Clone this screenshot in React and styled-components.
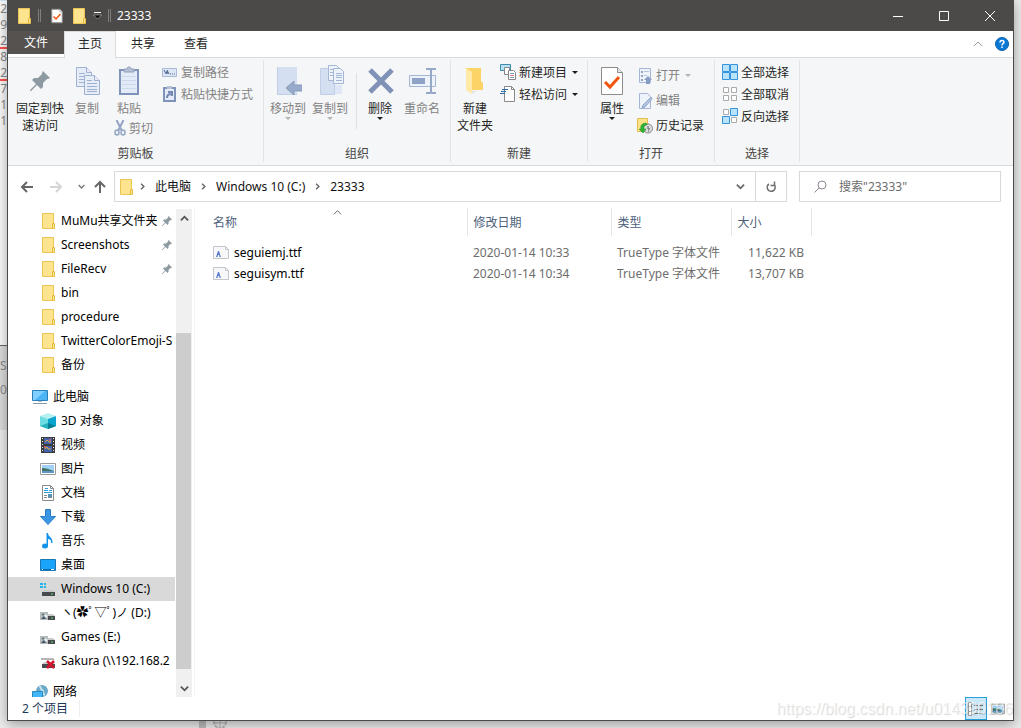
import React from "react";
import styled, { createGlobalStyle, css } from "styled-components";

const uiFont = `"Noto Sans", "Noto Sans CJK SC", sans-serif`;
const titleGrey = "#4c4a48";
const lineGrey = "#dadbdc";
const ribbonGrey = "#f5f6f7";

const GlobalStyle = createGlobalStyle`
  * {
    box-sizing: border-box;
  }

  body {
    margin: 0;
    background: #ebebeb;
    font-family: ${uiFont};
    font-size: 12px;
    line-height: 17px;
    color: #000;
  }

  button,
  input {
    font: inherit;
    color: inherit;
    background: none;
    border: 0;
    padding: 0;
    margin: 0;
  }

  svg {
    display: block;
    flex: none;
  }
`;

/* ---------- desktop behind the window ---------- */

const Desktop = styled.div`
  display: grid;
  grid-template-columns: 7px 1fr 7px;
  grid-template-rows: 1fr 7px;
  min-height: 100vh;
  overflow: hidden;
`;

const LeftStrip = styled.div`
  grid-row: 1 / 3;
  display: flex;
  flex-direction: column;
  overflow: hidden;
  color: #8a8a8a;
  background: #ededed;
`;

const StripSheet = styled.div`
  height: 346px;
  flex: none;
  background: #fafafa;
  border-top: 1px solid #cfe3f2;
  border-bottom: 1px solid #666;
`;

const StripLine = styled.div`
  display: flex;
  justify-content: flex-end;
  height: 16px;
  line-height: 16px;
  border-bottom: ${({ $red }) => ($red ? "2px solid #ff4d4d" : "0")};
`;

const StripDark = styled.div`
  height: 84px;
  flex: none;
  padding-top: 8px;
  background: #dcdcdc;
  line-height: 24px;
`;

const RightStrip = styled.div`
  grid-row: 1 / 3;
  grid-column: 3;
  background: #ebebeb;
`;

const BottomStrip = styled.div`
  grid-column: 2;
  grid-row: 2;
  display: flex;
  padding-left: 192px;
  gap: 6px;
  overflow: hidden;
`;

const BottomBlock = styled.div`
  width: 7px;
  background: #bbb;
`;

const Window = styled.div`
  position: relative;
  grid-column: 2;
  grid-row: 1;
  display: flex;
  flex-direction: column;
  min-width: 0;
  background: #fff;
  border: 1px solid ${titleGrey};
  border-top: 0;
  box-shadow: 0 3px 12px rgba(0, 0, 0, 0.35);
`;

/* ---------- title bar ---------- */

const TitleBar = styled.header`
  display: flex;
  align-items: center;
  height: 31px;
  padding-left: 8px;
  color: #fff;
  background: ${titleGrey};
`;

const QuickButton = styled.button`
  display: flex;
  align-items: center;
  justify-content: center;
  width: ${({ $narrow }) => ($narrow ? 14 : 22)}px;
  height: 24px;
`;

const QuickDivider = styled.span`
  width: 3px;
  height: 13px;
  margin: ${({ $tight }) => ($tight ? "0 6px 0 4px" : "0 5px 0 6px")};
  border: 1px solid #807e7c;
  border-width: 0 1px;
`;

const Title = styled.h1`
  flex: 1;
  margin: 0;
  font-size: 12px;
  font-weight: 400;
`;

const CaptionButton = styled.button`
  display: flex;
  align-items: center;
  justify-content: center;
  width: 46px;
  height: 31px;
`;

/* ---------- tabs ---------- */

const TabBar = styled.nav`
  display: flex;
  align-items: flex-start;
  height: 27px;
  border-bottom: 1px solid ${lineGrey};
`;

const Tab = styled.button`
  height: 25px;
  padding: 0 14px 0 15px;
  color: #262626;
  ${({ $kind }) =>
    $kind === "file" &&
    css`
      height: 23px;
      padding: 0 16px;
      color: #fff;
      background: #55524f;
    `}
  ${({ $kind }) =>
    $kind === "active" &&
    css`
      height: 27px;
      padding: 0 13px 3px;
      background: ${ribbonGrey};
      border: 1px solid ${lineGrey};
      border-bottom: 0;
    `}
`;

const TabTools = styled.div`
  display: flex;
  align-items: center;
  gap: 10px;
  height: 26px;
  margin-left: auto;
  padding-right: 4px;
`;

const IconButton = styled.button`
  display: flex;
  align-items: center;
  justify-content: center;
  min-width: 14px;
`;

/* ---------- ribbon ---------- */

const Ribbon = styled.section`
  display: flex;
  height: 108px;
  padding: 2px 0 3px;
  background: ${ribbonGrey};
  border-bottom: 1px solid ${lineGrey};
`;

const Group = styled.div`
  display: flex;
  flex-direction: column;
  width: ${({ $width }) => $width}px;
  border-right: 1px solid #e2e3e4;
`;

const GroupBody = styled.div`
  display: flex;
  flex: 1;
  align-items: flex-start;
  padding: 1px 0 0 ${({ $wide }) => ($wide ? 6 : 3)}px;
`;

const GroupLabel = styled.div`
  height: 19px;
  padding-top: 2px;
  text-align: center;
  color: #444;
`;

const BigButton = styled.button`
  display: flex;
  flex-direction: column;
  align-items: center;
  width: ${({ $wide }) => ($wide ? 52 : 42)}px;
  padding-top: 5px;
  color: ${({ disabled }) => (disabled ? "#838383" : "#262626")};
  white-space: nowrap;
`;

const BigIcon = styled.span`
  display: flex;
  align-items: center;
  justify-content: center;
  height: 34px;
  padding-bottom: 4px;
`;

const SmallColumn = styled.div`
  display: flex;
  flex-direction: column;
  align-items: flex-start;
  padding-top: ${({ $roomy }) => ($roomy ? 2 : 0)}px;
  margin-left: 4px;
`;

const PasteColumn = styled(SmallColumn)`
  margin-left: 0;
  width: 50px;
`;

const SmallButton = styled.button`
  display: flex;
  align-items: center;
  gap: 3px;
  height: ${({ $roomy }) => ($roomy ? 25 : 22)}px;
  padding-left: ${({ $indent }) => ($indent ? 6 : 0)}px;
  color: ${({ disabled }) => (disabled ? "#838383" : "#262626")};
  white-space: nowrap;
`;

const Caret = styled.span`
  width: 0;
  height: 0;
  margin: ${({ $side }) => ($side ? "0 0 0 2px" : "0")};
  border: 3px solid transparent;
  border-top-color: ${({ $faded }) => ($faded ? "#b4b4b4" : "#1e1e1e")};
  border-bottom: 0;
`;

const GroupDivider = styled.span`
  width: 1px;
  height: 56px;
  margin: 12px 2px 0 5px;
  background: #dfe0e1;
`;

/* ---------- address row ---------- */

const AddressRow = styled.div`
  display: flex;
  align-items: center;
  height: 42px;
  padding: 5px 12px 6px 10px;
`;

const NavButton = styled.button`
  display: flex;
  align-items: center;
  justify-content: center;
  width: ${({ $width }) => $width}px;
  height: 24px;
`;

const AddressBox = styled.div`
  display: flex;
  align-items: center;
  flex: 1;
  min-width: 0;
  height: 31px;
  padding-left: 3px;
  border: 1px solid #d9d9d9;
`;

const Crumb = styled.button`
  margin-right: 4px;
  color: #111;
  white-space: nowrap;
`;

const CrumbArrow = styled.span`
  margin: 0 9px 0 5px;
`;

const AddressEnd = styled.div`
  display: flex;
  height: 29px;
  margin-left: auto;

  ${IconButton} {
    width: 30px;
  }

  ${IconButton} + ${IconButton} {
    width: 31px;
    border-left: 1px solid #d9d9d9;
  }
`;

const SearchBox = styled.label`
  display: flex;
  align-items: center;
  gap: 12px;
  width: 202px;
  height: 31px;
  margin-left: 12px;
  padding: 0 14px;
  border: 1px solid #d9d9d9;

  input {
    width: 100%;
    min-width: 0;
    outline: 0;
  }

  input::placeholder {
    color: #6d6d6d;
    opacity: 1;
  }
`;

/* ---------- navigation pane and file list ---------- */

const Content = styled.div`
  display: flex;
  flex: 1 1 0;
  min-height: 0;
`;

const NavPane = styled.nav`
  display: flex;
  width: 187px;
  padding-top: 1px;
  border-right: 1px solid #f3f3f3;
`;

const Tree = styled.div`
  width: 167px;
  overflow: hidden;
`;

const TreeItem = styled.a`
  display: flex;
  align-items: center;
  gap: 5px;
  height: 24px;
  margin-top: ${({ $root, $tight }) => ($root ? ($tight ? 7 : 8) : 0)}px;
  padding-left: ${({ $root }) => ($root ? 24 : 32)}px;
  color: #000;
  text-decoration: none;
  white-space: nowrap;
  background: ${({ $selected }) => ($selected ? "#d9d9d9" : "transparent")};
`;

const TreeLabel = styled.span`
  padding-bottom: 1px;
  ${({ $pinned }) => $pinned && `width: 96px;`}
`;

const Scrollbar = styled.div`
  display: flex;
  flex-direction: column;
  width: 16px;
  margin-left: 1px;
  background: #f0f0f0;
`;

const ScrollArrow = styled.button`
  display: flex;
  align-items: center;
  justify-content: center;
  height: 18px;
`;

const ScrollTrack = styled.div`
  display: flex;
  flex-direction: column;
  flex: 1;
  padding: 106px 1px 10px 0;
`;

const ScrollThumb = styled.div`
  flex: 1;
  background: #cdcdcd;
`;

const FileArea = styled.main`
  flex: 1;
  min-width: 0;
`;

const FileTable = styled.table`
  border-collapse: collapse;
  table-layout: fixed;
  width: 616px;
`;

const Th = styled.th`
  position: relative;
  width: ${({ $width }) => $width}px;
  height: 28px;
  padding: 0 6px 0 ${({ $first }) => ($first ? 18 : 6)}px;
  border-right: 1px solid #e5e5e5;
  color: #4c607a;
  font-weight: 400;
  text-align: left;
`;

const SortMark = styled.span`
  position: absolute;
  top: 0;
  right: 125px;
`;

const Td = styled.td`
  height: 21px;
  padding: 0 7px 0 ${({ $first }) => ($first ? 18 : 6)}px;
  color: ${({ $first }) => ($first ? "#000" : "#6d6d6d")};
  text-align: ${({ $right }) => ($right ? "right" : "left")};
  white-space: nowrap;
`;

const Spacer = styled.tr`
  height: 6px;
`;

const FileName = styled.span`
  display: flex;
  align-items: center;
  gap: 5px;
`;

/* ---------- status bar ---------- */

const StatusBar = styled.footer`
  display: flex;
  align-items: center;
  height: 23px;
  padding-left: 14px;
  color: #1e395b;
`;

const StatusCount = styled.span`
  padding-right: 11px;
  border-right: 1px solid #eee;
`;

const ViewButtons = styled.div`
  display: flex;
  margin-left: auto;
  padding-right: 4px;
`;

const ViewButton = styled.button`
  display: flex;
  align-items: center;
  justify-content: center;
  width: 22px;
  height: 23px;
  ${({ $active }) =>
    $active &&
    css`
      background: #cce8f6;
      border: 1px solid #26a0da;
    `}
`;

const Watermark = styled.div`
  position: absolute;
  right: 0;
  bottom: 0;
  font-family: "Liberation Sans", sans-serif;
  font-size: 16px;
  line-height: 22px;
  color: rgba(255, 255, 255, 0.6);
  text-shadow: 1px 1px 1px rgba(0, 0, 0, 0.16);
  pointer-events: none;
`;

/* ---------- icons ---------- */

const FolderIcon = () => (
  <svg width="16" height="16" viewBox="0 0 16 16">
    <path d="M2.500.5h11v15h-11z" fill="#ffe48f" stroke="#ecc452" />
    <path d="M12.500 10.500h2v5h-2z" fill="#ffe48f" stroke="#e6bb44" />
  </svg>
);

const CheckDoc = ({ size = 16 }) => (
  <svg width={size} height={size} viewBox="0 0 32 32">
    <path d="M5.500 2.500h16l5 5v22h-21z" fill="#fff" stroke="#8c8c8c" strokeWidth={size > 20 ? 1 : 2} />
    <path d="M21.500 2.500v5h5" fill="#e6e6e6" stroke="#8c8c8c" />
    <path d="M9 17l5 5 9-10" fill="none" stroke="#f0560f" strokeWidth="3" />
  </svg>
);

const Pin = ({ size = 12 }) => (
  <svg width={size} height={size} viewBox="0 0 20 20">
    <path
      d="M13 0l7 7-2 1-1 0-4 4 0 4-2 2-4-4L1 20 0 20 0 19 6 13 2 9l2-2 4 0 4-4 0-1z"
      fill="#8e9aa2"
    />
  </svg>
);

const CopyIcon = () => (
  <svg width="26" height="30" viewBox="0 0 26 30">
    <g fill="#e6edf8" stroke="#9fb1d0">
      <path d="M2.500 1.500h10l5 5v14h-15z" />
      <path d="M12.500 1.500v5h5" />
      <path d="M5 7.500h6M5 10.500h6M5 13.500h6M5 16.500h6" />
      <path d="M10.500 9.500h10l5 5v14h-15z" />
      <path d="M20.500 9.500v5h5" />
      <path d="M13 14.500h5M13 17.500h10M13 20.500h10M13 23.500h10M13 25.500h10" />
    </g>
  </svg>
);

const PasteIcon = () => (
  <svg width="22" height="30" viewBox="0 0 22 30">
    <path d="M2 4h18v24H2z" fill="#e3ebf8" stroke="#8094bb" strokeWidth="2" />
    <path d="M6 6V3h3l1-2h2l1 2h3v3z" fill="#b6c1d4" stroke="#93a2bf" />
    <path d="M4 10.500h14M4 14.500h14M4 18.500h14M4 22.500h14" stroke="#ccd8ec" />
  </svg>
);

const CutIcon = () => (
  <svg width="12" height="16" viewBox="0 0 12 16" fill="none" stroke="#93a5c4">
    <path d="M2.500 0l5 10M9.500 0l-5 10" strokeWidth="2" />
    <ellipse cx="3" cy="12.500" rx="2" ry="2.500" strokeWidth="1.500" />
    <ellipse cx="9" cy="12.500" rx="2" ry="2.500" strokeWidth="1.500" />
  </svg>
);

const PathIcon = () => (
  <svg width="16" height="16" viewBox="0 0 16 16">
    <path d="M.5 4.500h14v8H.5z" fill="#dde6f5" stroke="#a9b9d6" />
    <path d="M2 6l2 4 1-3 1 3M5 6l2 4" fill="none" stroke="#526a95" />
    <path d="M8 10h1M10 10h1M12 10h1" stroke="#526a95" strokeWidth="1" />
  </svg>
);

const ShortcutIcon = () => (
  <svg width="16" height="16" viewBox="0 0 16 16">
    <path d="M2 2h11v13H2z" fill="#e3ebf8" stroke="#8094bb" strokeWidth="2" />
    <path d="M5 0h5v3H5z" fill="#b6c1d4" />
    <path d="M5 12c0-3 1-4 4-4M6 6h4v4" fill="none" stroke="#7388b2" strokeWidth="2" />
  </svg>
);

const MoveIcon = () => (
  <svg width="28" height="32" viewBox="0 0 28 32">
    <path d="M3 2h20v28H3z" fill="#d5dff2" />
    <path d="M3.500 2v27M3 29.500h20" stroke="#c0cee8" />
    <path d="M12 23l8-7v4h8v6h-8v4z" fill="#98abca" stroke="#879bbd" />
  </svg>
);

const CopyToIcon = () => (
  <svg width="28" height="32" viewBox="0 0 28 32">
    <path d="M4.500 3.500h14v26h-14z" fill="#d5dff2" stroke="#c0cee8" />
    <path d="M19 20h7v9h-7z" fill="#dfe7f6" />
    <g fill="#edf2fb" stroke="#a5b6d4">
      <path d="M12.500 .5h8l3 3v12h-11z" />
      <path d="M17.500 3.500h7l3 3v12h-10z" />
      <path d="M20 8.500h6M20 10.500h6M20 12.500h6M20 15.500h6M14 4.500h3M14 7.500h3M14 10.500h3" />
    </g>
  </svg>
);

const DeleteIcon = () => (
  <svg width="28" height="30" viewBox="0 0 28 30">
    <path d="M4 4l22 22M26 4L4 26" stroke="#8092b6" strokeWidth="5" />
  </svg>
);

const RenameIcon = () => (
  <svg width="30" height="30" viewBox="0 0 30 30" fill="none">
    <path d="M2.500 9.500h26v11h-26z" fill="#edf2fb" stroke="#a5b6d4" />
    <path d="M5 12h13v6H5z" fill="#8fa3c6" />
    <path d="M19 3h4l1 1 1-1h4M19 27h4l1-1 1 1h4M24 4v22" stroke="#96a8c8" strokeWidth="2" />
  </svg>
);

const BigFolder = () => (
  <svg width="24" height="32" viewBox="0 0 24 32">
    <path d="M3 3h15v13l2 2v7H5z" fill="#fbd367" />
    <path d="M3 3l6 4v22l-6-4z" fill="#ffe9a6" />
    <path d="M9 29l5-3H9z" fill="#e5e5e5" />
  </svg>
);

const NewItemIcon = () => (
  <svg width="16" height="16" viewBox="0 0 16 16">
    <path d="M.5.5h10v6H.5z" fill="#b5e3f5" stroke="#4288a8" />
    <path d="M4.500 3.500h5v7h-5z" fill="#fff" stroke="#888" />
    <path d="M8.500 6.500h5l2 2v7h-7z" fill="#fff" stroke="#888" />
    <path d="M10 9.500h4M10 13.500h4" stroke="#7a9cc8" />
    <path d="M10 11.500h4" stroke="#e58080" />
  </svg>
);

const EasyAccessIcon = () => (
  <svg width="16" height="16" viewBox="0 0 16 16">
    <path d="M4.500.5h7l3 3v12h-10z" fill="#fff" stroke="#888" />
    <path d="M11.500.5v3h3" fill="none" stroke="#888" />
    <path d="M2 3.500h6M1 5.500h5M0 7.500h5" stroke="#2c6ca8" />
  </svg>
);

const OpenIcon = () => (
  <svg width="16" height="16" viewBox="0 0 16 16">
    <path d="M2.500.5h11v14h-11z" fill="#edf2fb" stroke="#a5b6d4" />
    <path d="M4 3h2v2H4zM4 7h2v2H4zM4 11h2v2H4z" fill="#92a5c6" />
    <path d="M7 3.500h5M7 7.500h3" stroke="#b4c2da" />
    <path d="M9 16v-4H7l4-4 4 4h-2v4z" fill="#879cc1" />
  </svg>
);

const EditIcon = () => (
  <svg width="16" height="16" viewBox="0 0 16 16">
    <path d="M2.500.5h8l3 3v12h-11z" fill="#edf2fb" stroke="#a5b6d4" />
    <path d="M5 15l1-3 8-8 1 2-7 8z" fill="#b3c4e2" stroke="#93a7cb" />
  </svg>
);

const HistoryIcon = () => (
  <svg width="16" height="16" viewBox="0 0 16 16">
    <path d="M.5.5h10v13H.5z" fill="#ffe389" stroke="#e2bd4d" />
    <circle cx="11" cy="10.500" r="4.500" fill="#ddd" stroke="#888" />
    <path d="M11 8v3h2M11 13h1" fill="none" stroke="#555" />
    <path d="M9 5c-4 0-6 3-5 6H2l4 4 3-4H7c-1-3 1-4 3-4z" fill="#2db432" stroke="#188a25" strokeWidth=".5" />
  </svg>
);

// which of the four tiles are filled: top-left, top-right, bottom-left, bottom-right
const TilesIcon = ({ filled }) => (
  <svg width="16" height="16" viewBox="0 0 16 16">
    {[[0, 0], [8, 0], [0, 8], [8, 8]].map(([x, y], idx) =>
      filled[idx] ? (
        <path key={idx} d={`M${x + 0.5} ${y + 0.5}h7v7h-7z`} fill="#b9e2fb" stroke="#3793dc" />
      ) : (
        <path key={idx} d={`M${x + 1.5} ${y + 1.5}h5v5h-5z`} fill="#fff" stroke="#aaa" />
      )
    )}
  </svg>
);

const Chevron = ({ dir = "down", size = 9, color = "#555", weight = 2 }) => {
  const turn = { down: 0, left: 90, up: 180, right: 270 }[dir];
  return (
    <svg width={size} height={size} viewBox="0 0 10 10">
      <path
        d="M1 3l4 4 4-4"
        fill="none"
        stroke={color}
        strokeWidth={weight}
        transform={`rotate(${turn} 5 5)`}
      />
    </svg>
  );
};

const Arrow = ({ dir, color = "#666" }) => {
  const turn = { left: 0, up: 90, right: 180 }[dir];
  return (
    <svg width="14" height="14" viewBox="0 0 14 14">
      <path
        d="M13 7H2M7 2L2 7l5 5"
        fill="none"
        stroke={color}
        strokeWidth="2"
        transform={`rotate(${turn} 7 7)`}
      />
    </svg>
  );
};

const FontFile = () => (
  <svg width="16" height="14" viewBox="0 0 16 14">
    <path d="M.5.5h12l3 3v9H.5z" fill="#f7f8fa" stroke="#c3c6ca" />
    <path d="M12.500.5v3h3" fill="none" stroke="#c3c6ca" />
    <path d="M3 11l2-6h1l2 6H6.500l-.3-2H5l-.5 2z" fill="#5a7acb" />
  </svg>
);

const PcIcon = () => (
  <svg width="16" height="16" viewBox="0 0 16 16">
    <path d="M.5 1.500h15v10H.5z" fill="#4db5f5" stroke="#2b7fb8" />
    <path d="M1 2h12L3 11H1z" fill="#80d0ff" />
    <path d="M6 12h4v1H6z" fill="#b9c4ce" />
    <path d="M1 14.500h14" stroke="#8a9aa8" />
  </svg>
);

const CubeIcon = () => (
  <svg width="16" height="16" viewBox="0 0 16 16">
    <path d="M0 3l8-3 8 3-8 3z" fill="#b8f1f3" />
    <path d="M0 3l8 3v10l-8-3z" fill="#6edde2" />
    <path d="M16 3L8 6v10l8-3z" fill="#0aa5cf" />
    <path d="M0 13l8-3v6z" fill="#25b3bf" />
    <path d="M8 10l8 3-8 3z" fill="#087f95" />
  </svg>
);

const VideoIcon = () => (
  <svg width="16" height="16" viewBox="0 0 16 16">
    <path d="M1 0h14v16H1z" fill="#3c3c3c" />
    <path d="M2.500 1v15M13.500 1v15" stroke="#e8e8e8" strokeDasharray="1 2" />
    <path d="M4 1h8v6H4zM4 9h8v6H4z" fill="#4263ad" />
    <path d="M5 5l2-2 2 2h2M5 12l2-2 1 2h3" fill="none" stroke="#e0b040" />
    <path d="M9 2h2v2H9zM4 9h2v2H4z" fill="#c86068" />
  </svg>
);

const PictureIcon = ({ size = 16 }) => (
  <svg width={size} height={size} viewBox="0 0 16 16">
    <path d="M.5 2.500h15v11H.5z" fill="#fff" stroke="#9a9a9a" />
    <path d="M2 4h12v8H2z" fill="#9fd0f5" />
    <path d="M2 7c4 0 6 1 12 3v2H2z" fill="#44735d" />
    <path d="M2 10h12v2H2z" fill="#5e95c8" />
  </svg>
);

const DocIcon = () => (
  <svg width="16" height="16" viewBox="0 0 16 16">
    <path d="M2.500.5h8l3 3v12h-11z" fill="#fff" stroke="#8a8a8a" />
    <path d="M10.500.5v3h3" fill="none" stroke="#8a8a8a" />
    <path d="M5 3.500h3M4 5.500h4M9 5.500h3M4 7.500h8" stroke="#2c9adf" />
    <path d="M4 10.500h3M4 12.500h3M8 12.500h4" stroke="#8a8a8a" />
    <path d="M8 9h4v3H8z" fill="#5592ba" />
  </svg>
);

const DownloadIcon = () => (
  <svg width="16" height="16" viewBox="0 0 16 16">
    <path d="M5.500.5h5v7h5L8 15.500.500 7.500h5z" fill="#3b97e3" stroke="#2b7cc8" />
  </svg>
);

const MusicIcon = () => (
  <svg width="16" height="16" viewBox="0 0 16 16">
    <ellipse cx="5" cy="13" rx="3" ry="2.500" fill="#1593ea" />
    <path d="M6.500 0H8c0 4 5 4 4.500 10H11c.5-3-1-4-3-4v7H6.500z" fill="#1593ea" />
  </svg>
);

const DesktopIcon = () => (
  <svg width="16" height="16" viewBox="0 0 16 16">
    <path d="M.5 2.500h15v11H.5z" fill="#19a3fa" stroke="#1878b8" />
    <path d="M1 12.500h14" stroke="#096bb0" />
    <path d="M2 12.500h1M11 12.500h3" stroke="#fff" />
  </svg>
);

const DriveIcon = ({ badge }) => (
  <svg width="16" height="16" viewBox="0 0 16 16">
    {badge === "windows" && (
      <path d="M0 2h3v2H0zM4 2h2v2H4zM0 5h3v2H0zM4 5h2v2H4z" fill="#1eb6ec" />
    )}
    <path d="M4 9h9l2 2H2z" fill="#c9cccf" />
    <path d="M2 11h13v4H2z" fill="#474b4f" />
    <path d="M11 13h2" stroke="#52e052" />
    {badge === "shared" && (
      <>
        <path d="M0 7h8v8H0z" fill="#b6bbbe" />
        <circle cx="3" cy="9.500" r="1" fill="#51707e" />
        <circle cx="6" cy="11" r="1.500" fill="#eef0f2" />
        <path d="M1 14l3-3 2 3z" fill="#41586a" />
      </>
    )}
    {badge === "lost" && (
      <>
        <path d="M1 5h12l2 2H1z" fill="#b5b5b5" />
        <path d="M7 8l7 7M14 8l-7 7" stroke="#d8122a" strokeWidth="2.500" />
      </>
    )}
  </svg>
);

const NetworkIcon = () => (
  <svg width="16" height="16" viewBox="0 0 16 16">
    <circle cx="10" cy="7" r="6" fill="#6ba9c8" />
    <path d="M7 2c3 1 1 3 3 4s0 4 3 5" fill="none" stroke="#c2e2ee" strokeWidth="2" />
    <path d="M.5 7.500h10v6H.5z" fill="#41b5f8" stroke="#2b87bc" />
  </svg>
);

const DetailsIcon = () => (
  <svg width="16" height="14" viewBox="0 0 16 14">
    <path d="M.5.5h3v13h-3z" fill="#fff" stroke="#9d9d9d" />
    <path d="M1 4.500h3M1 9.500h3" stroke="#9d9d9d" />
    <path d="M6 3.500h10M6 7.500h10M6 11.500h10" stroke="#777" strokeDasharray="4 1" />
  </svg>
);

/* ---------- data ---------- */

const stripLines = [
  ["2"],
  ["9"],
  ["2", true],
  ["8"],
  ["22", true],
  ["07"],
  ["21"],
  ["1"],
];

const treeItems = [
  { label: "MuMu共享文件夹", icon: <FolderIcon />, pinned: true },
  { label: "Screenshots", icon: <FolderIcon />, pinned: true },
  { label: "FileRecv", icon: <FolderIcon />, pinned: true },
  { label: "bin", icon: <FolderIcon /> },
  { label: "procedure", icon: <FolderIcon /> },
  { label: "TwitterColorEmoji-S", icon: <FolderIcon /> },
  { label: "备份", icon: <FolderIcon /> },
  { label: "此电脑", icon: <PcIcon />, root: true },
  { label: "3D 对象", icon: <CubeIcon /> },
  { label: "视频", icon: <VideoIcon /> },
  { label: "图片", icon: <PictureIcon /> },
  { label: "文档", icon: <DocIcon /> },
  { label: "下载", icon: <DownloadIcon /> },
  { label: "音乐", icon: <MusicIcon /> },
  { label: "桌面", icon: <DesktopIcon /> },
  { label: "Windows 10 (C:)", icon: <DriveIcon badge="windows" />, selected: true },
  { label: "ヽ(✿ﾟ▽ﾟ)ノ (D:)", icon: <DriveIcon badge="shared" /> },
  { label: "Games (E:)", icon: <DriveIcon badge="shared" /> },
  { label: "Sakura (\\\\192.168.2", icon: <DriveIcon badge="lost" /> },
  { label: "网络", icon: <NetworkIcon />, root: true, tight: true },
];

const files = [
  { name: "seguiemj.ttf", date: "2020-01-14 10:33", type: "TrueType 字体文件", size: "11,622 KB" },
  { name: "seguisym.ttf", date: "2020-01-14 10:34", type: "TrueType 字体文件", size: "13,707 KB" },
];

const crumbs = ["此电脑", "Windows 10 (C:)", "23333"];

/* ---------- parts ---------- */

const Big = ({ icon, lines, caret, ...rest }) => (
  <BigButton {...rest}>
    <BigIcon>{icon}</BigIcon>
    {lines.map((line) => (
      <span key={line}>{line}</span>
    ))}
    {caret && <Caret $faded={rest.disabled} />}
  </BigButton>
);

const Small = ({ icon, label, caret, ...rest }) => (
  <SmallButton {...rest}>
    {icon}
    <span>{label}</span>
    {caret && <Caret $side $faded={rest.disabled} />}
  </SmallButton>
);

const RibbonBar = () => (
  <Ribbon>
    <Group $width={256}>
      <GroupBody $wide>
        <Big $wide icon={<Pin size={20} />} lines={["固定到快", "速访问"]} />
        <Big disabled icon={<CopyIcon />} lines={["复制"]} />
        <PasteColumn>
          <Big disabled icon={<PasteIcon />} lines={["粘贴"]} />
          <Small disabled $indent icon={<CutIcon />} label="剪切" />
        </PasteColumn>
        <SmallColumn>
          <Small disabled icon={<PathIcon />} label="复制路径" />
          <Small disabled icon={<ShortcutIcon />} label="粘贴快捷方式" />
        </SmallColumn>
      </GroupBody>
      <GroupLabel>剪贴板</GroupLabel>
    </Group>
    <Group $width={187}>
      <GroupBody>
        <Big disabled caret icon={<MoveIcon />} lines={["移动到"]} />
        <Big disabled caret icon={<CopyToIcon />} lines={["复制到"]} />
        <GroupDivider />
        <Big caret icon={<DeleteIcon />} lines={["删除"]} />
        <Big disabled icon={<RenameIcon />} lines={["重命名"]} />
      </GroupBody>
      <GroupLabel>组织</GroupLabel>
    </Group>
    <Group $width={137}>
      <GroupBody>
        <Big icon={<BigFolder />} lines={["新建", "文件夹"]} />
        <SmallColumn>
          <Small caret icon={<NewItemIcon />} label="新建项目" />
          <Small caret icon={<EasyAccessIcon />} label="轻松访问" />
        </SmallColumn>
      </GroupBody>
      <GroupLabel>新建</GroupLabel>
    </Group>
    <Group $width={127}>
      <GroupBody>
        <Big caret icon={<CheckDoc size={32} />} lines={["属性"]} />
        <SmallColumn $roomy>
          <Small disabled caret $roomy icon={<OpenIcon />} label="打开" />
          <Small disabled $roomy icon={<EditIcon />} label="编辑" />
          <Small $roomy icon={<HistoryIcon />} label="历史记录" />
        </SmallColumn>
      </GroupBody>
      <GroupLabel>打开</GroupLabel>
    </Group>
    <Group $width={85}>
      <GroupBody>
        <SmallColumn>
          <Small icon={<TilesIcon filled={[1, 1, 1, 1]} />} label="全部选择" />
          <Small icon={<TilesIcon filled={[0, 0, 0, 0]} />} label="全部取消" />
          <Small icon={<TilesIcon filled={[0, 1, 1, 0]} />} label="反向选择" />
        </SmallColumn>
      </GroupBody>
      <GroupLabel>选择</GroupLabel>
    </Group>
  </Ribbon>
);

const App = () => (
  <Desktop>
    <GlobalStyle />
    <LeftStrip>
      <StripSheet>
        {stripLines.map(([text, red], idx) => (
          <StripLine key={idx} $red={red}>
            {text}
          </StripLine>
        ))}
      </StripSheet>
      <StripDark>
        <div>S-</div>
        <div>0(</div>
      </StripDark>
    </LeftStrip>
    <RightStrip />
    <BottomStrip>
      <BottomBlock />
      <svg width="16" height="16" viewBox="0 0 16 16" fill="none" stroke="#b5b5b5" strokeWidth="2">
        <circle cx="8" cy="1" r="6" strokeDasharray="3 1" />
        <path d="M8 0v7M2 2h12" strokeWidth="1" />
      </svg>
    </BottomStrip>
    <Window>
      <TitleBar>
        <FolderIcon />
        <QuickDivider />
        <QuickButton aria-label="属性">
          <CheckDoc />
        </QuickButton>
        <QuickButton aria-label="新建文件夹">
          <FolderIcon />
        </QuickButton>
        <QuickButton $narrow aria-label="自定义快速访问工具栏">
          <svg width="9" height="9" viewBox="0 0 9 9">
            <path d="M1 1.500h7" stroke="#fff" />
            <path d="M.5 4h8l-4 4z" fill="#000" stroke="#ddd" strokeWidth=".5" />
          </svg>
        </QuickButton>
        <QuickDivider $tight />
        <Title>23333</Title>
        <CaptionButton aria-label="最小化">
          <svg width="10" height="10" viewBox="0 0 10 10" stroke="#fff">
            <path d="M0 5.500h10" />
          </svg>
        </CaptionButton>
        <CaptionButton aria-label="最大化">
          <svg width="10" height="10" viewBox="0 0 10 10" stroke="#fff" fill="none">
            <path d="M.5.5h9v9h-9z" />
          </svg>
        </CaptionButton>
        <CaptionButton aria-label="关闭">
          <svg width="10" height="10" viewBox="0 0 10 10" stroke="#fff">
            <path d="M0 0l10 10M10 0L0 10" />
          </svg>
        </CaptionButton>
      </TitleBar>
      <TabBar>
        <Tab $kind="file">文件</Tab>
        <Tab $kind="active">主页</Tab>
        <Tab>共享</Tab>
        <Tab>查看</Tab>
        <TabTools>
          <IconButton aria-label="最小化功能区">
            <Chevron dir="up" color="#999" weight={1} size={10} />
          </IconButton>
          <IconButton aria-label="帮助">
            <svg width="14" height="14" viewBox="0 0 14 14">
              <circle cx="7" cy="7" r="6.500" fill="#0b78d4" stroke="#0860ad" />
              <path d="M5 5.500c0-3 4-2.500 4-.3C9 6.500 7 6.500 7 8.500M7 9.500v1.500" fill="none" stroke="#fff" strokeWidth="1.500" />
            </svg>
          </IconButton>
        </TabTools>
      </TabBar>
      <RibbonBar />
      <AddressRow>
        <NavButton $width={18} aria-label="后退">
          <Arrow dir="left" />
        </NavButton>
        <NavButton $width={40} aria-label="前进">
          <Arrow dir="right" color="#d5d5d5" />
        </NavButton>
        <NavButton $width={10} aria-label="最近浏览的位置">
          <Chevron size={7} color="#777" />
        </NavButton>
        <NavButton $width={28} aria-label="上移">
          <Arrow dir="up" />
        </NavButton>
        <AddressBox>
          <FolderIcon />
          {crumbs.map((crumb) => (
            <React.Fragment key={crumb}>
              <CrumbArrow>
                <Chevron dir="right" size={7} color="#666" />
              </CrumbArrow>
              <Crumb>{crumb}</Crumb>
            </React.Fragment>
          ))}
          <AddressEnd>
            <IconButton aria-label="以前的位置">
              <Chevron color="#666" />
            </IconButton>
            <IconButton aria-label="刷新">
              <svg width="12" height="12" viewBox="0 0 12 12" fill="none" stroke="#707070">
                <path d="M9 3.500A4 4 0 1 1 4 3" strokeWidth="1.500" />
                <path d="M5.500 4.500H9.500V.5" strokeWidth="1.500" />
              </svg>
            </IconButton>
          </AddressEnd>
        </AddressBox>
        <SearchBox>
          <svg width="13" height="13" viewBox="0 0 13 13" fill="none" stroke="#8f8595">
            <circle cx="8" cy="5" r="4" />
            <path d="M5 8L.5 12.500" />
          </svg>
          <input type="search" placeholder={'搜索"23333"'} aria-label="搜索" />
        </SearchBox>
      </AddressRow>
      <Content>
        <NavPane>
          <Tree>
            {treeItems.map(({ label, icon, pinned, root, tight, selected }) => (
              <TreeItem key={label} href="#" $root={root} $tight={tight} $selected={selected}>
                {icon}
                <TreeLabel $pinned={pinned}>{label}</TreeLabel>
                {pinned && <Pin size={10} />}
              </TreeItem>
            ))}
          </Tree>
          <Scrollbar>
            <ScrollArrow aria-label="向上滚动">
              <Chevron dir="up" />
            </ScrollArrow>
            <ScrollTrack>
              <ScrollThumb />
            </ScrollTrack>
            <ScrollArrow aria-label="向下滚动">
              <Chevron />
            </ScrollArrow>
          </Scrollbar>
        </NavPane>
        <FileArea>
          <FileTable>
            <thead>
              <tr>
                <Th $first $width={272}>
                  名称
                  <SortMark>
                    <Chevron dir="up" weight={1} />
                  </SortMark>
                </Th>
                <Th $width={144}>修改日期</Th>
                <Th $width={120}>类型</Th>
                <Th $width={80}>大小</Th>
              </tr>
            </thead>
            <tbody>
              <Spacer />
              {files.map((file) => (
                <tr key={file.name}>
                  <Td $first>
                    <FileName>
                      <FontFile />
                      {file.name}
                    </FileName>
                  </Td>
                  <Td>{file.date}</Td>
                  <Td>{file.type}</Td>
                  <Td $right>{file.size}</Td>
                </tr>
              ))}
            </tbody>
          </FileTable>
        </FileArea>
      </Content>
      <StatusBar>
        <StatusCount>2 个项目</StatusCount>
        <ViewButtons>
          <ViewButton $active aria-label="详细信息">
            <DetailsIcon />
          </ViewButton>
          <ViewButton aria-label="大图标">
            <PictureIcon size={14} />
          </ViewButton>
        </ViewButtons>
      </StatusBar>
      <Watermark>https://blog.csdn.net/u014390186</Watermark>
    </Window>
  </Desktop>
);

export default App;
